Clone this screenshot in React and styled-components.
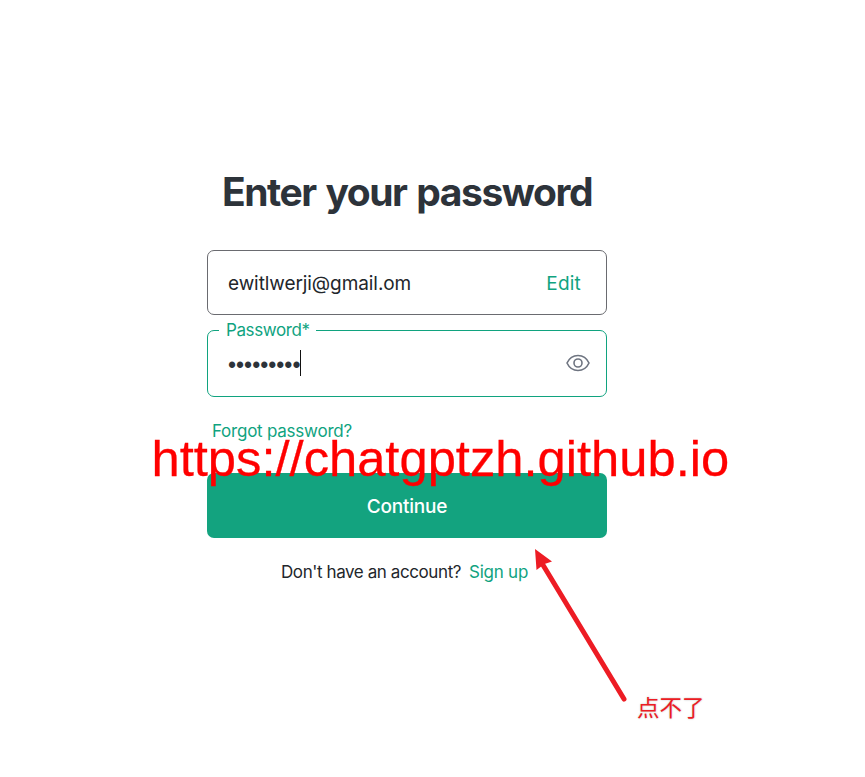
import React from "react";
import styled, { createGlobalStyle } from "styled-components";

const GREEN = "#10a37f";

const GlobalStyle = createGlobalStyle`
  * { box-sizing: border-box; }
  body {
    margin: 0;
    background: #fff;
    color: #2d333a;
    font-family: Inter, "Liberation Sans", sans-serif;
  }
`;

const Page = styled.div`
  position: relative;
  height: 777px;
  overflow: hidden;
`;

const Card = styled.main`
  display: flex;
  flex-direction: column;
  width: 400px;
  margin-left: 207px;
  padding-top: 168px;
`;

const Title = styled.h1`
  margin: 0 0 34px;
  height: 48px;
  line-height: 48px;
  font-size: 39px;
  font-weight: 700;
  text-align: center;
  white-space: nowrap;
  letter-spacing: -1.45px;
  word-spacing: 2px;
`;

const Field = styled.div`
  position: relative;
  display: flex;
  align-items: center;
  justify-content: space-between;
  height: ${(p) => p.$height}px;
  padding: ${(p) => p.$top || 0}px ${(p) => p.$right}px 0 20px;
  border: 1px solid ${(p) => (p.$active ? GREEN : "#6a6b70")};
  border-radius: 7px;
  margin-bottom: ${(p) => p.$gap}px;
`;

const Email = styled.span`
  color: #22262b;
  font-size: 19px;
  letter-spacing: -0.08px;
`;

const Link = styled.a`
  color: ${GREEN};
  font-size: ${(p) => p.$size}px;
  letter-spacing: ${(p) => p.$spacing || 0}px;
  text-decoration: none;
`;

const FieldLabel = styled.label`
  position: absolute;
  top: -11px;
  left: 11px;
  width: 97px;
  padding-left: 7px;
  background: #fff;
  color: ${GREEN};
  font-size: 17px;
  line-height: 20px;
  letter-spacing: -0.4px;
  white-space: nowrap;
`;

const Masked = styled.span`
  display: flex;
  align-items: center;
  height: 26px;
  margin-bottom: 1px;
  padding-top: 3px;
  border-right: 1px solid #111;
  font-family: "Liberation Sans", sans-serif;
  font-size: 23px;
  line-height: 28px;
`;

const Forgot = styled.div`
  display: flex;
  height: 20px;
  line-height: 20px;
  margin-bottom: 32px;
  padding-left: 5px;
`;

const Submit = styled.button`
  height: 65px;
  padding: 2px 0 0;
  border: 0;
  border-radius: 7px;
  background: #13a37f;
  color: #fff;
  font: 500 19px Inter, sans-serif;
  letter-spacing: -0.2px;
`;

const Signup = styled.p`
  display: flex;
  gap: 8px;
  margin: 24px 0 0;
  padding-left: 74px;
  font-size: 17px;
  line-height: 20px;
  white-space: nowrap;
`;

const Prompt = styled.span`
  color: #22262b;
  letter-spacing: -0.41px;
`;

const Watermark = styled.div`
  position: absolute;
  left: 151.5px;
  top: 430px;
  color: #f00;
  font-family: "Liberation Sans", Arial, sans-serif;
  font-size: 50.7px;
  line-height: 58px;
  white-space: nowrap;
  -webkit-text-stroke: 0.3px #f00;
`;

const Arrow = styled.svg`
  position: absolute;
  left: 530px;
  top: 545px;
`;

const Note = styled.div`
  position: absolute;
  left: 637px;
  top: 692px;
  color: #ed1c24;
  font-family: "Noto Sans CJK SC", sans-serif;
  font-size: 22.5px;
  line-height: 28px;
  text-shadow: 0 0 2px #bbb;
  white-space: nowrap;
`;

const Eye = styled.svg`
  margin-bottom: 2px;
`;

function EyeIcon() {
  return (
    <Eye width="24" height="18" viewBox="0 0 24 18" fill="none" stroke="#6e7480" strokeWidth="1.6">
      <path d="M1 9C3.3 4.1 7.3 1.5 12 1.5S20.700 4.100 23 9C20.700 13.900 16.700 16.500 12 16.500S3.300 13.900 1 9Z" />
      <circle cx="12" cy="9" r="4" />
    </Eye>
  );
}

export default function App() {
  return (
    <Page>
      <GlobalStyle />
      <Card>
        <Title>Enter your password</Title>
        <Field $height={65} $right={25} $gap={15} $top={2}>
          <Email>ewitlwerji@gmail.om</Email>
          <Link $size={19} $spacing={0.2}>Edit</Link>
        </Field>
        <Field $height={67} $right={16} $gap={24} $active>
          <FieldLabel>Password*</FieldLabel>
          <Masked>•••••••••</Masked>
          <EyeIcon />
        </Field>
        <Forgot>
          <Link $size={17} $spacing={-0.24}>Forgot password?</Link>
        </Forgot>
        <Submit>Continue</Submit>
        <Signup>
          <Prompt>Don't have an account?</Prompt>
          <Link $size={17} $spacing={-0.25}>Sign up</Link>
        </Signup>
      </Card>
      <Watermark>https://chatgptzh.github.io</Watermark>
      <Arrow width="100" height="160" viewBox="0 0 100 160">
        <path d="M13 20L94 154" stroke="#ed1c24" strokeWidth="5" strokeLinecap="round" />
        <path d="M5 4L22 16.500L14.500 19L6.500 25Z" fill="#ed1c24" />
      </Arrow>
      <Note>点不了</Note>
    </Page>
  );
}
